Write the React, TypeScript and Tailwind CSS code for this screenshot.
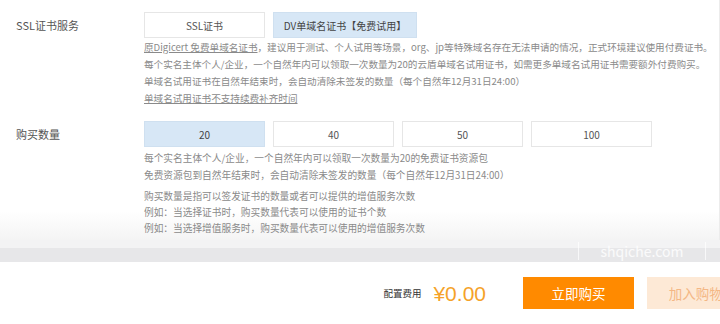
import React, { useState } from 'react';

const FONT = { fontFamily: '"Noto Sans CJK SC", "Liberation Sans", sans-serif' };

const OptionButton: React.FC<{ label: string; active?: boolean; width: string; onClick: () => void }> = ({
  label,
  active,
  width,
  onClick,
}) => (
  <button
    type="button"
    onClick={onClick}
    className={`h-[26px] ${width} shrink-0 flex items-center justify-center border text-[10px] ${
      active ? 'bg-[#d7e7f6] border-[#cfe0f0] text-[#444]' : 'bg-white border-[#e6e6e6] text-[#555]'
    }`}
  >
    {label}
  </button>
);

const App: React.FC = () => {
  const [certType, setCertType] = useState('dv');
  const [quantity, setQuantity] = useState(20);

  return (
    <div className="w-[720px] h-[324px] flex flex-col bg-white overflow-hidden" style={FONT}>
      {/* form */}
      <div className="flex-1 flex flex-col pt-[12px] border-r border-[#ececec] bg-gradient-to-b from-white from-[88%] to-[#f4f4f4]">
        <div className="flex">
          <div className="w-[144px] shrink-0 pl-4 h-[26px] flex items-center text-[11px] text-[#555]">SSL证书服务</div>
          <div className="flex flex-col min-w-0">
            <div className="flex gap-2">
              <OptionButton label="SSL证书" width="w-[121px]" active={certType === 'ssl'} onClick={() => setCertType('ssl')} />
              <OptionButton
                label="DV单域名证书【免费试用】"
                width="w-[144px]"
                active={certType === 'dv'}
                onClick={() => setCertType('dv')}
              />
            </div>
            <div className="mt-[1px] text-[9.6px] leading-[17px] text-[#8a8a8a] whitespace-nowrap">
              <p>
                <span className="underline">原Digicert 免费单域名证书</span>，建议用于测试、个人试用等场景，org、jp等特殊域名存在无法申请的情况，正式环境建议使用付费证书。
              </p>
              <p>每个实名主体个人/企业，一个自然年内可以领取一次数量为20的云盾单域名试用证书，如需更多单域名试用证书需要额外付费购买。</p>
              <p>单域名试用证书在自然年结束时，会自动清除未签发的数量（每个自然年12月31日24:00）</p>
              <p className="underline">单域名试用证书不支持续费补齐时间</p>
            </div>
          </div>
        </div>

        <div className="flex mt-[14px]">
          <div className="w-[144px] shrink-0 pl-4 h-[26px] flex items-center text-[11px] text-[#555]">购买数量</div>
          <div className="flex flex-col min-w-0">
            <div className="flex gap-2">
              {[20, 40, 50, 100].map(n => (
                <OptionButton
                  key={n}
                  label={String(n)}
                  width="w-[121px]"
                  active={quantity === n}
                  onClick={() => setQuantity(n)}
                />
              ))}
            </div>
            <div className="mt-[3px] text-[9.7px] leading-[17px] text-[#8a8a8a] whitespace-nowrap">
              <p>每个实名主体个人/企业，一个自然年内可以领取一次数量为20的免费证书资源包</p>
              <p>免费资源包到自然年结束时，会自动清除未签发的数量（每个自然年12月31日24:00）</p>
            </div>
            <div className="mt-[4px] text-[9.7px] leading-[16px] text-[#8a8a8a] whitespace-nowrap">
              <p>购买数量是指可以签发证书的数量或者可以提供的增值服务次数</p>
              <p>例如：当选择证书时，购买数量代表可以使用的证书个数</p>
              <p>例如：当选择增值服务时，购买数量代表可以使用的增值服务次数</p>
            </div>
          </div>
        </div>
      </div>

      {/* gap band */}
      <div className="h-[8px] bg-[#f3f3f4]" />
      <div className="relative h-[14px] bg-[#e7e7e9]">
        <div className="absolute left-[578px] top-[-6px] w-[128px] h-[18px] border-x border-white/70 flex items-center justify-center text-[14px] text-white/80">
          shqiche.com
        </div>
      </div>

      {/* bottom bar */}
      <div className="h-[62px] flex items-center justify-end gap-[13px] pl-4 bg-white">
        <div className="flex items-center gap-[12px] mr-[24px]">
          <span className="text-[9.5px] text-[#333]">配置费用</span>
          <span className="text-[21px] text-[#f5a229] leading-none" style={{ fontFamily: '"Liberation Sans", sans-serif' }}>
            ¥0.00
          </span>
        </div>
        <button
          type="button"
          className="w-[111px] h-[32px] bg-[#ff8a00] text-white text-[13.5px] flex items-center justify-center"
        >
          立即购买
        </button>
        <button
          type="button"
          className="w-[111px] h-[32px] shrink-0 mr-[-38px] bg-[#fde9d6] text-[#f4b785] text-[13.5px] flex items-center justify-center"
        >
          加入购物车
        </button>
      </div>
    </div>
  );
};

export default App;
